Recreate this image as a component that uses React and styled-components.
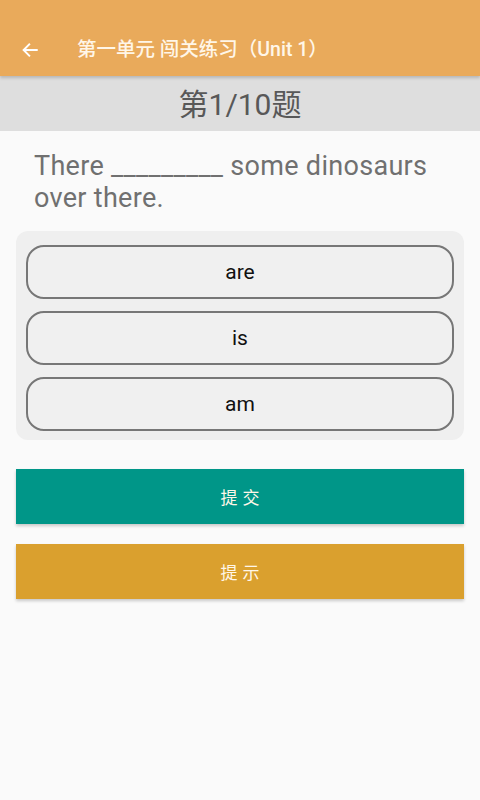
import styled, { createGlobalStyle } from 'styled-components';

const GlobalStyle = createGlobalStyle`
  html, body {
    margin: 0;
    padding: 0;
    background: #fafafa;
    font-family: Roboto, "Noto Sans CJK SC", sans-serif;
  }
`;

const Page = styled.div`
  width: 480px;
  min-height: 800px;
  background: #fafafa;
  display: flex;
  flex-direction: column;
`;

const AppBar = styled.header`
  height: 76px;
  background: #e9aa5b;
  display: flex;
  align-items: flex-end;
  padding: 0 0 11px 18px;
  box-sizing: border-box;
  box-shadow: 0 2px 3px rgba(0, 0, 0, 0.18);
  position: relative;
  z-index: 1;
`;

const BackButton = styled.button`
  width: 24px;
  height: 30px;
  padding: 0;
  border: none;
  background: none;
  display: flex;
  align-items: center;
  justify-content: center;
  margin-right: 35px;
`;

const BarTitle = styled.h1`
  margin: 0;
  height: 30px;
  line-height: 30px;
  font-size: 19.5px;
  font-weight: 500;
  color: #fff6e8;
  font-family: Roboto, "Noto Sans CJK SC", sans-serif;
`;

const Counter = styled.div`
  height: 55px;
  padding-bottom: 3px;
  box-sizing: border-box;
  background: #dedede;
  display: flex;
  align-items: center;
  justify-content: center;
  font-size: 30px;
  color: #585858;
  font-family: Roboto, "Noto Sans CJK SC", sans-serif;
`;

const Question = styled.p`
  margin: 19px 30px 0 34px;
  font-size: 27px;
  line-height: 32px;
  letter-spacing: 0.3px;
  color: #707070;
`;

const OptionPanel = styled.div`
  margin: 17px 16px 0;
  padding: 14px 10px 9px;
  background: #efefef;
  border-radius: 12px;
  display: flex;
  flex-direction: column;
  gap: 12px;
`;

const Option = styled.button`
  height: 54px;
  border: 2px solid #777;
  border-radius: 18px;
  background: #f0f0f0;
  color: #111;
  font-size: 21px;
  font-family: Roboto, sans-serif;
`;

const ActionButton = styled.button`
  margin: ${(p) => p.$top}px 16px 0;
  height: 55px;
  border: none;
  background: ${(p) => p.$color};
  color: #fff6e8;
  font-size: 17px;
  letter-spacing: 5px;
  text-indent: 5px;
  font-family: "Noto Sans CJK SC", sans-serif;
  box-shadow: 0 2px 3px rgba(0, 0, 0, 0.2);
`;

export default function App() {
  return (
    <Page>
      <GlobalStyle />
      <AppBar>
        <BackButton aria-label="back">
          <svg width="18" height="18" viewBox="0 0 24 24" fill="none" stroke="#fff" strokeWidth="2.6" strokeLinecap="square">
            <path d="M21 12H4M11 4.5L3.5 12 11 19.5" />
          </svg>
        </BackButton>
        <BarTitle>第一单元 闯关练习（Unit 1）</BarTitle>
      </AppBar>
      <Counter>第1/10题</Counter>
      <Question>There _________ some dinosaurs over there.</Question>
      <OptionPanel>
        <Option>are</Option>
        <Option>is</Option>
        <Option>am</Option>
      </OptionPanel>
      <ActionButton $top={29} $color="#009688">提交</ActionButton>
      <ActionButton $top={20} $color="#daa02e">提示</ActionButton>
    </Page>
  );
}
